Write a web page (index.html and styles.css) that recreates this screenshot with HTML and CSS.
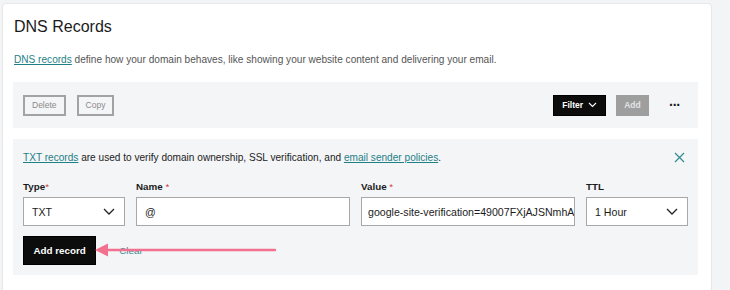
FILE: index.html
```html
<!DOCTYPE html>
<html lang="en">
<head>
  <meta charset="UTF-8" />
  <title>DNS Records</title>
  <link rel="stylesheet" href="styles.css">
</head>
<body>
  <div class="card">
    <h1>DNS Records</h1>
    <p class="intro"><a href="#">DNS records</a> define how your domain behaves, like showing your website content and delivering your email.</p>

    <div class="toolbar">
      <div class="left">
        <button class="btn-outline">Delete</button>
        <button class="btn-outline">Copy</button>
      </div>
      <div class="right">
        <button class="btn-dark">Filter
          <svg width="9" height="6" viewBox="0 0 9 6"><path d="M1 1l3.5 3.5L8 1" fill="none" stroke="#fff" stroke-width="1.1"/></svg>
        </button>
        <button class="btn-grey">Add</button>
        <span class="more">&middot;&middot;&middot;</span>
      </div>
    </div>

    <div class="editor">
      <div class="notice">
        <p><a href="#">TXT records</a> are used to verify domain ownership, SSL verification, and <a href="#">email sender policies</a>.</p>
        <svg class="close" width="11" height="11" viewBox="0 0 11 11"><path d="M1 1l9 9M10 1l-9 9" stroke="#2f8a92" stroke-width="1.2"/></svg>
      </div>

      <div class="fields">
        <label class="field">
          <span class="label">Type<i>*</i></span>
          <span class="box select">TXT
            <svg width="12" height="7" viewBox="0 0 12 7"><path d="M1 1l5 5 5-5" fill="none" stroke="#222" stroke-width="1.3"/></svg>
          </span>
        </label>
        <label class="field">
          <span class="label">Name <i>*</i></span>
          <span class="box">@</span>
        </label>
        <label class="field">
          <span class="label">Value <i>*</i></span>
          <span class="box clip">google-site-verification=49007FXjAJSNmhA</span>
        </label>
        <label class="field">
          <span class="label">TTL</span>
          <span class="box select">1 Hour
            <svg width="12" height="7" viewBox="0 0 12 7"><path d="M1 1l5 5 5-5" fill="none" stroke="#222" stroke-width="1.3"/></svg>
          </span>
        </label>
      </div>

      <div class="actions">
        <button class="btn-dark big">Add record</button>
        <a href="#" class="clear">Clear</a>
        <svg class="arrow" width="184" height="16" viewBox="0 0 184 16"><path d="M12 8H180" stroke="#f2718e" stroke-width="2.4" stroke-linecap="round"/><path d="M0 8L13 1.5V14.5Z" fill="#f2718e"/></svg>
      </div>
    </div>
  </div>
</body>
</html>
```

FILE: styles.css
```css
* {
  box-sizing: border-box;
  margin: 0;
  padding: 0;
}
body {
  font-family: 'Liberation Sans', Arial, sans-serif;
  background: #f3f4f6;
  color: #1b1b1b;
  width: 730px;
  height: 290px;
  overflow: hidden;
}
a {
  color: #1e7f86;
  text-decoration: underline;
}
.card {
  margin: 3px 0 0 2px;
  width: 710px;
  height: 300px;
  background: #fff;
  border: 1px solid #e6e7ea;
  border-radius: 4px;
  padding: 13px 13px 0 10px;
}
h1 {
  font-size: 16px;
  font-weight: normal;
  line-height: 20px;
  margin-left: 1px;
}
.intro {
  font-size: 10.1px;
  color: #555;
  margin: 17px 0 0 1px;
  line-height: 12px;
}
.toolbar {
  margin-top: 16px;
  background: #f4f5f7;
  height: 46px;
  display: flex;
  justify-content: space-between;
  align-items: center;
  padding: 0 10px;
}
.left, .right {
  display: flex;
  align-items: center;
  gap: 11px;
}
.right {
  gap: 10px;
}
button {
  font-family: inherit;
  cursor: pointer;
}
.btn-outline {
  height: 21px;
  padding: 0 7px;
  background: #f4f5f7;
  border: 2px solid #a3a3a3;
  color: #8a8a8a;
  font-size: 8.5px;
}
.btn-dark {
  height: 21px;
  background: #0c0c0c;
  border: 1px solid #000;
  color: #fff;
  font-size: 8.5px;
  font-weight: bold;
  padding: 0 8px;
  display: flex;
  align-items: center;
  gap: 5px;
}
.btn-grey {
  height: 21px;
  width: 33px;
  background: #9e9e9e;
  border: none;
  color: #e4e4e4;
  font-size: 8.5px;
  font-weight: bold;
}
.more {
  margin: 0 8px 0 10px;
  font-size: 14px;
  font-weight: bold;
  letter-spacing: -1px;
  line-height: 1;
}
.editor {
  margin-top: 11px;
  background: #f4f5f7;
  height: 136px;
  padding: 0 10px;
}
.notice {
  height: 36px;
  display: flex;
  align-items: center;
  justify-content: space-between;
  padding: 0 3px 0 0;
  font-size: 10.1px;
  color: #222;
}
.fields {
  margin-top: 6px;
  display: grid;
  grid-template-columns: 102px 214px 214px 102px;
  gap: 11px;
}
.field {
  display: flex;
  flex-direction: column;
}
.label {
  font-size: 9.8px;
  font-weight: bold;
  line-height: 12px;
  margin-bottom: 4px;
}
.label i {
  color: #d23b3b;
  font-style: normal;
  font-weight: normal;
}
.box {
  height: 29px;
  background: #fff;
  border: 1px solid #a8a8a8;
  display: flex;
  align-items: center;
  justify-content: space-between;
  padding: 0 7px 0 8px;
  font-size: 10.6px;
  color: #1b1b1b;
  white-space: nowrap;
}
.select {
  padding: 0 9px 0 8px;
}
.clip {
  overflow: hidden;
  justify-content: flex-start;
  padding-left: 6px;
}
.actions {
  position: relative;
  margin-top: 10px;
  display: flex;
  align-items: center;
  gap: 23px;
}
.btn-dark.big {
  height: 29px;
  font-size: 9.8px;
  padding: 0 9.5px;
}
.clear {
  font-size: 9.8px;
  text-decoration: none;
  color: #3a8a90;
}
.arrow {
  position: absolute;
  left: 72px;
  top: 6px;
}
```
